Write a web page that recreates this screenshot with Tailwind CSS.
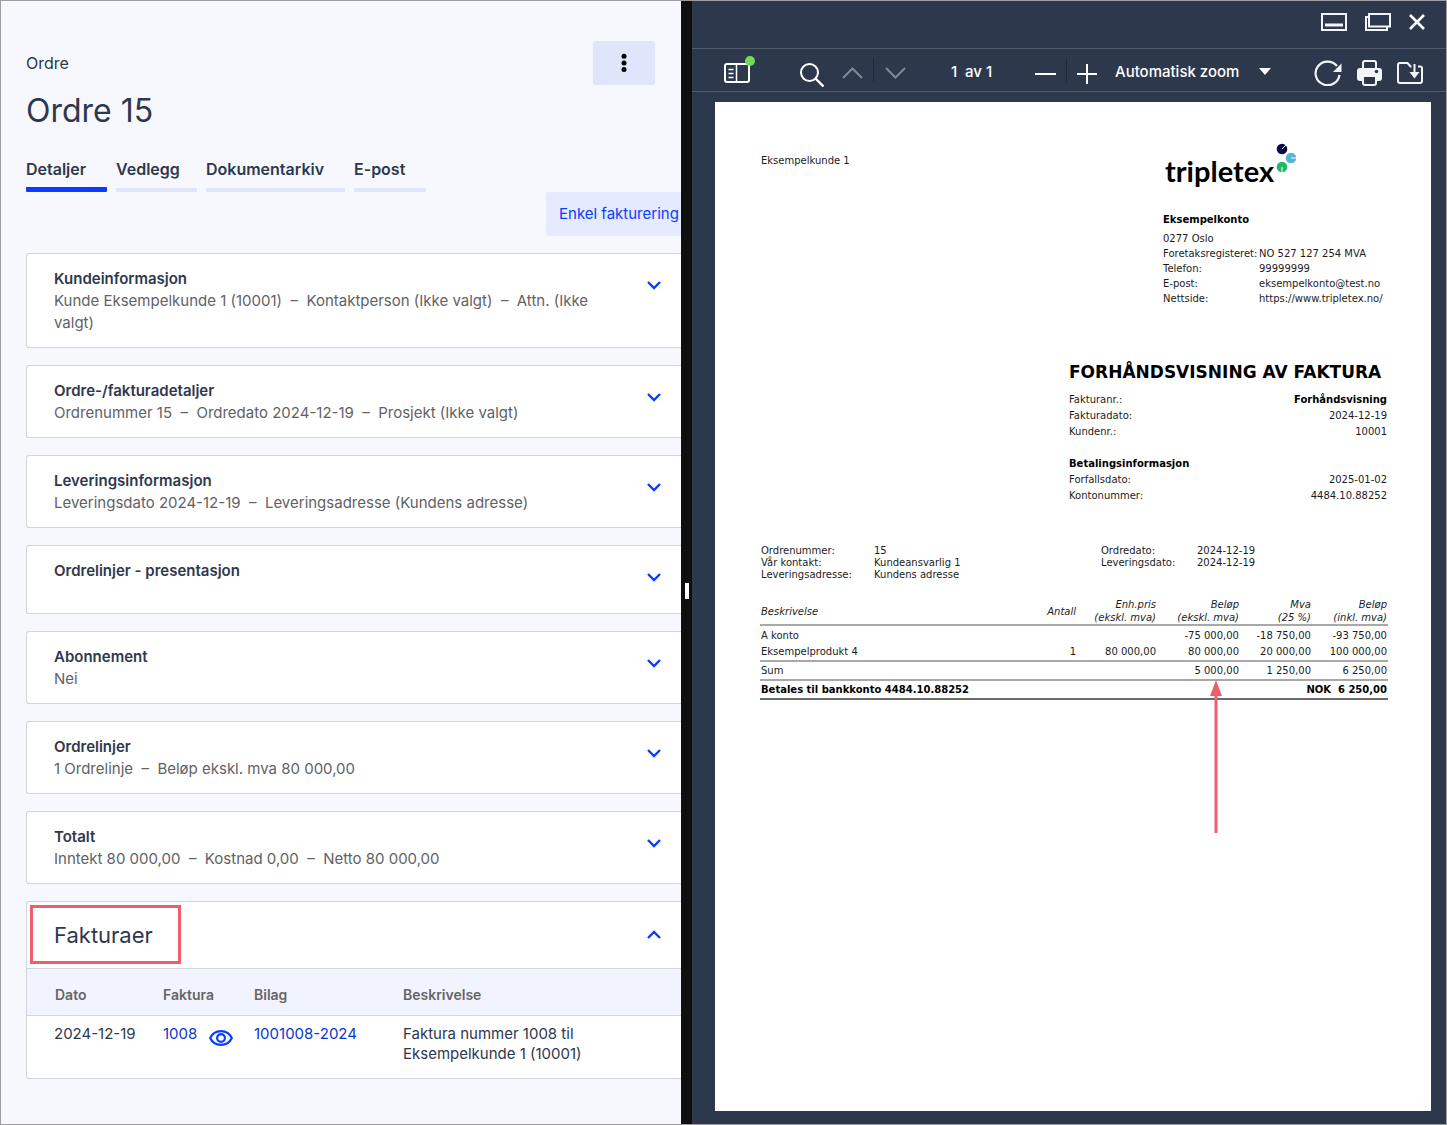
<!DOCTYPE html>
<html lang="no">
<head>
  <meta charset="UTF-8">
  <meta name="viewport" content="width=device-width, initial-scale=1.0">
  <title>Ordre 15</title>
  <script src="https://cdn.jsdelivr.net/npm/@tailwindcss/browser@4"></script>
</head>
<body class="min-h-screen flex border border-[#9c9ca1] bg-[#f7f8fd] font-[Inter,Roboto,sans-serif] text-[#2e384d]">

  <!-- Order -->
  <main class="w-8/17 shrink-0 pl-[25px] overflow-hidden">
    <header class="flex justify-between pt-10 pr-[26px]">
      <div>
        <p class="mt-2.5 text-base leading-6">Ordre</p>
        <h1 class="mt-4 text-[32px] leading-10">Ordre 15</h1>
      </div>
      <button type="button" aria-label="Flere valg" class="w-[62px] h-11 rounded-[3px] bg-[#dfe5fb] flex items-center justify-center">
        <svg class="w-1.5 h-5" viewBox="0 0 6 20" fill="#000"><circle cx="3" cy="3.3" r="2.5"/><circle cx="3" cy="10" r="2.5"/><circle cx="3" cy="16.6" r="2.5"/></svg>
      </button>
    </header>

    <nav class="mt-[25px] flex gap-[9px] text-base leading-6 font-semibold">
      <a href="#" class="w-[81px] h-9 pt-px border-b-5 border-[#0a3cff] rounded-[1px]">Detaljer</a>
      <a href="#" class="w-[81px] h-9 pt-px border-b-4 border-[#dfe5fb] rounded-[1px]">Vedlegg</a>
      <a href="#" class="w-[139px] h-9 pt-px border-b-4 border-[#dfe5fb] rounded-[1px]">Dokumentarkiv</a>
      <a href="#" class="w-[72px] h-9 pt-px border-b-4 border-[#dfe5fb] rounded-[1px]">E-post</a>
    </nav>

    <div class="flex justify-end">
      <button type="button" class="w-[135px] h-11 pl-[13px] rounded-l-[3px] bg-[#e5eafe] text-left text-[15px] text-[#0a3cff] whitespace-nowrap">Enkel fakturering</button>
    </div>

    <div class="mt-[17px] flex flex-col gap-[17px] text-[15px] leading-[22px]">
      <button type="button" class="flex items-start justify-between pt-3.5 pb-[13px] pl-[27px] pr-5 border border-r-0 border-[#d3d5da] rounded-l-[3px] bg-white text-left">
        <span class="w-[576px]">
          <span class="block font-semibold">Kundeinformasjon</span>
          <span class="block text-[#5f6266]">Kunde Eksempelkunde 1 (10001) &nbsp;–&nbsp; Kontaktperson (Ikke valgt) &nbsp;–&nbsp; Attn. (Ikke valgt)</span>
        </span>
        <svg class="mt-2.5 w-3.5 h-3.5" viewBox="0 0 14 14" fill="none" stroke="#0a3cff" stroke-width="2.4"><path d="M1 4l6 6 6-6"/></svg>
      </button>
      <button type="button" class="flex items-start justify-between pt-3.5 pb-[13px] pl-[27px] pr-5 border border-r-0 border-[#d3d5da] rounded-l-[3px] bg-white text-left">
        <span>
          <span class="block font-semibold">Ordre-/fakturadetaljer</span>
          <span class="block text-[#5f6266]">Ordrenummer 15 &nbsp;–&nbsp; Ordredato 2024-12-19 &nbsp;–&nbsp; Prosjekt (Ikke valgt)</span>
        </span>
        <svg class="mt-2.5 w-3.5 h-3.5" viewBox="0 0 14 14" fill="none" stroke="#0a3cff" stroke-width="2.4"><path d="M1 4l6 6 6-6"/></svg>
      </button>
      <button type="button" class="flex items-start justify-between pt-3.5 pb-[13px] pl-[27px] pr-5 border border-r-0 border-[#d3d5da] rounded-l-[3px] bg-white text-left">
        <span>
          <span class="block font-semibold">Leveringsinformasjon</span>
          <span class="block text-[#5f6266]">Leveringsdato 2024-12-19 &nbsp;–&nbsp; Leveringsadresse (Kundens adresse)</span>
        </span>
        <svg class="mt-2.5 w-3.5 h-3.5" viewBox="0 0 14 14" fill="none" stroke="#0a3cff" stroke-width="2.4"><path d="M1 4l6 6 6-6"/></svg>
      </button>
      <button type="button" class="flex items-start justify-between pt-3.5 pb-[31px] pl-[27px] pr-5 border border-r-0 border-[#d3d5da] rounded-l-[3px] bg-white text-left">
        <span class="font-semibold">Ordrelinjer - presentasjon</span>
        <svg class="mt-2.5 -mb-3 w-3.5 h-3.5" viewBox="0 0 14 14" fill="none" stroke="#0a3cff" stroke-width="2.4"><path d="M1 4l6 6 6-6"/></svg>
      </button>
      <button type="button" class="flex items-start justify-between pt-3.5 pb-[13px] pl-[27px] pr-5 border border-r-0 border-[#d3d5da] rounded-l-[3px] bg-white text-left">
        <span>
          <span class="block font-semibold">Abonnement</span>
          <span class="block text-[#5f6266]">Nei</span>
        </span>
        <svg class="mt-2.5 w-3.5 h-3.5" viewBox="0 0 14 14" fill="none" stroke="#0a3cff" stroke-width="2.4"><path d="M1 4l6 6 6-6"/></svg>
      </button>
      <button type="button" class="flex items-start justify-between pt-3.5 pb-[13px] pl-[27px] pr-5 border border-r-0 border-[#d3d5da] rounded-l-[3px] bg-white text-left">
        <span>
          <span class="block font-semibold">Ordrelinjer</span>
          <span class="block text-[#5f6266]">1 Ordrelinje &nbsp;–&nbsp; Beløp ekskl. mva 80 000,00</span>
        </span>
        <svg class="mt-2.5 w-3.5 h-3.5" viewBox="0 0 14 14" fill="none" stroke="#0a3cff" stroke-width="2.4"><path d="M1 4l6 6 6-6"/></svg>
      </button>
      <button type="button" class="flex items-start justify-between pt-3.5 pb-[13px] pl-[27px] pr-5 border border-r-0 border-[#d3d5da] rounded-l-[3px] bg-white text-left">
        <span>
          <span class="block font-semibold">Totalt</span>
          <span class="block text-[#5f6266]">Inntekt 80 000,00 &nbsp;–&nbsp; Kostnad 0,00 &nbsp;–&nbsp; Netto 80 000,00</span>
        </span>
        <svg class="mt-2.5 w-3.5 h-3.5" viewBox="0 0 14 14" fill="none" stroke="#0a3cff" stroke-width="2.4"><path d="M1 4l6 6 6-6"/></svg>
      </button>

      <section class="relative border border-r-0 border-[#d3d5da] rounded-l-[3px] bg-white">
        <button type="button" class="w-full h-[66px] flex items-center justify-between pl-[27px] pr-5">
          <span class="text-[22px]">Fakturaer</span>
          <svg class="w-3.5 h-3.5" viewBox="0 0 14 14" fill="none" stroke="#0a3cff" stroke-width="2.4"><path d="M1 10l6-6 6 6"/></svg>
        </button>
        <div class="absolute left-[3px] top-[3px] w-[151px] h-[59px] border-3 border-[#ee5f6d]"></div>
        <table class="w-full table-fixed text-left align-top">
          <thead class="bg-[#f1f3fe] text-sm text-[#666]">
            <tr class="h-[47px] border-y border-[#d3d5da]">
              <th class="w-[136px] pl-7 pt-1.5 font-semibold">Dato</th>
              <th class="w-[91px] pt-1.5 font-semibold">Faktura</th>
              <th class="w-[149px] pt-1.5 font-semibold">Bilag</th>
              <th class="pt-1.5 font-semibold">Beskrivelse</th>
            </tr>
          </thead>
          <tbody class="leading-5">
            <tr class="align-top">
              <td class="pl-[27px] pt-2">2024-12-19</td>
              <td class="pt-2 text-[#0c35d0]">
                <div class="flex gap-3">
                  <a href="#">1008</a>
                  <a href="#" aria-label="Vis faktura" class="pt-1.5"><svg class="w-6 h-4" viewBox="0 0 24 16" fill="none" stroke="#0a3cff" stroke-width="2.2"><path d="M1.2 8C3.200 3.600 7.200 1.100 12 1.100S20.800 3.600 22.800 8C20.800 12.400 16.800 14.900 12 14.900S3.200 12.400 1.200 8z"/><circle cx="12" cy="8" r="3.900"/></svg></a>
                </div>
              </td>
              <td class="pt-2 text-[#0c35d0]"><a href="#">1001008-2024</a></td>
              <td class="pt-2 pb-[14px] pr-12">Faktura nummer 1008 til Eksempelkunde 1 (10001)</td>
            </tr>
          </tbody>
        </table>
      </section>
    </div>
  </main>

  <div class="w-[11px] shrink-0 bg-[#0f0f0f] flex items-center justify-center pt-14">
    <span class="w-1 h-4 bg-white"></span>
  </div>

  <!-- PDF preview -->
  <aside class="flex-1 min-w-0 flex flex-col bg-[#2e384c] text-white">
    <div class="h-12 pr-[21px] pb-1.5 flex items-center justify-end gap-[18px] border-b border-[#525a6b]">
      <button type="button" aria-label="Minimer"><svg class="block w-[26px] h-[18px]" viewBox="0 0 26 18" fill="none" stroke="#f4f5f8" stroke-width="2"><path d="M1 1h24v16H1z"/><path d="M4 12h18" stroke-width="3"/></svg></button>
      <button type="button" aria-label="Gjenopprett"><svg class="block w-[26px] h-[18px]" viewBox="0 0 26 18" fill="none" stroke="#f4f5f8" stroke-width="2"><path d="M4 1h21v12.500H4z"/><path d="M4 4H1v13h21v-3.500"/></svg></button>
      <button type="button" aria-label="Lukk"><svg class="block w-4 h-4" viewBox="0 0 16 16" fill="none" stroke="#fff" stroke-width="2.600"><path d="M1 1l14 14M15 1L1 15"/></svg></button>
    </div>

    <div class="h-[43px] pt-1 pl-8 pr-[23px] flex items-center border-b border-[#525a6b] text-[15px] font-medium">
      <button type="button" aria-label="Sidepanel" class="relative mt-0.5">
        <svg class="block w-[26px] h-5" viewBox="0 0 26 20" fill="none" stroke="#fff" stroke-width="2"><rect x="1" y="1" width="24" height="18" rx="2"/><path d="M12.500 1v18M4.500 6.500h5M4.500 10.500h5M4.500 14.500h5" stroke-width="1.500"/></svg>
        <span class="absolute -top-[7px] -right-[5px] size-2.5 rounded-full bg-[#6fdc54]"></span>
      </button>
      <button type="button" aria-label="Søk" class="ml-[50px] mt-1.5"><svg class="block size-6" viewBox="0 0 24 24" fill="none" stroke="#fff" stroke-width="2"><circle cx="9.500" cy="9.500" r="8.500"/><path d="M15.500 15.500l8 8" stroke-width="2.400"/></svg></button>
      <button type="button" aria-label="Forrige" class="ml-[18px] mt-0.5"><svg class="block w-[21px] h-3" viewBox="0 0 21 12" fill="none" stroke="#818896" stroke-width="2"><path d="M1 11l9.500-9.500L20 11"/></svg></button>
      <span class="ml-2.5 mb-1 w-px h-6 bg-[#1f2839]"></span>
      <button type="button" aria-label="Neste" class="ml-[11px] mt-0.5"><svg class="block w-[21px] h-3" viewBox="0 0 21 12" fill="none" stroke="#818896" stroke-width="2"><path d="M1 1l9.500 9.500L20 1"/></svg></button>
      <label class="ml-[45px] w-[84px] flex gap-1 whitespace-nowrap"><input type="text" value="1" aria-label="Side" class="w-2.5 bg-transparent outline-none">av 1</label>
      <button type="button" aria-label="Zoom ut" class="mt-0.5"><svg class="block w-[21px] h-5" viewBox="0 0 21 20" stroke="#fff" stroke-width="2"><path d="M0 11h21"/></svg></button>
      <span class="ml-2.5 mb-1 w-px h-6 bg-[#1f2839]"></span>
      <button type="button" aria-label="Zoom inn" class="ml-2.5 mt-1"><svg class="block w-5 h-5" viewBox="0 0 20 20" stroke="#fff" stroke-width="2"><path d="M0 10h20M10 0v20"/></svg></button>
      <div class="relative ml-[18px] w-[156px]">
        <select aria-label="Zoom" class="w-full appearance-none bg-transparent outline-none"><option>Automatisk zoom</option></select>
        <svg class="absolute right-0 top-[7px] w-3 h-[7px] pointer-events-none" viewBox="0 0 12 7" fill="#fff"><path d="M0 0h12L6 7z"/></svg>
      </div>
      <div class="ml-auto flex items-center gap-[15px] pt-0.5">
        <button type="button" aria-label="Roter"><svg class="block w-7 h-[26px]" viewBox="0 0 28 26" fill="none" stroke="#f4f5f8" stroke-width="2.200"><path d="M25.500 14.800A12 11.800 0 1 1 23 6"/><path d="M27.500 3.500v8.500h-8.500z" fill="#f4f5f8" stroke="none"/></svg></button>
        <button type="button" aria-label="Skriv ut"><svg class="block w-[25px] h-[26px]" viewBox="0 0 25 26"><path d="M6 8V3a2 2 0 0 1 2-2h9a2 2 0 0 1 2 2v5" fill="none" stroke="#f4f5f8" stroke-width="2"/><path d="M3 8h19a3 3 0 0 1 3 3v7a3 3 0 0 1-3 3H3a3 3 0 0 1-3-3v-7a3 3 0 0 1 3-3z" fill="#f4f5f8"/><circle cx="19.500" cy="11.500" r="1.800" fill="#2e384c"/><path d="M6 16h13v7a2 2 0 0 1-2 2H8a2 2 0 0 1-2-2z" fill="#2e384c" stroke="#f4f5f8" stroke-width="2"/></svg></button>
        <button type="button" aria-label="Last ned"><svg class="block w-[26px] h-[22px]" viewBox="0 0 26 22" fill="none" stroke="#f4f5f8" stroke-width="2"><path d="M14.500 4.500h-1L10.500 1H3a2 2 0 0 0-2 2v16a2 2 0 0 0 2 2h20a2 2 0 0 0 2-2V6.500a2 2 0 0 0-2-2h-2"/><path d="M17.500 2v11"/><path d="M12.500 10h10l-5 6.500z" fill="#f4f5f8" stroke="none"/></svg></button>
      </div>
    </div>

    <div class="flex-1 flex pt-2.5 pb-[13px] pl-[23px] pr-[15px]">
      <article class="flex-1 bg-white pt-10 px-[43px] font-['DejaVu_Sans',sans-serif] text-[10px] leading-4 text-[#1c1c1c]">
        <div class="flex justify-between px-[3px]">
          <p class="pt-[11px]">Eksempelkunde 1</p>
          <div class="w-[222px]">
            <div class="flex h-[46px] text-black">
              <span class="pt-[11px] pl-0.5 font-[Lato,sans-serif] font-bold text-[29px] leading-9">tripletex</span>
              <svg class="w-[22px] h-[30px]" viewBox="0 0 22 30"><circle cx="8" cy="7" r="5.300" fill="#04094f"/><path d="M8 7l4-4" stroke="#fff" stroke-width="1"/><circle cx="17" cy="16" r="5.300" fill="#5ab4d6"/><path d="M17 16h5" stroke="#fff" stroke-width="1"/><circle cx="8" cy="25" r="5.300" fill="#22b866"/><path d="M8 25v5" stroke="#fff" stroke-width="1"/></svg>
            </div>
            <p class="mt-6 font-bold text-black">Eksempelkonto</p>
            <dl class="mt-[3px] grid grid-cols-[96px_1fr] leading-[15px] whitespace-nowrap">
              <dt class="col-span-2">0277 Oslo</dt>
              <dt>Foretaksregisteret:</dt><dd>NO 527 127 254 MVA</dd>
              <dt>Telefon:</dt><dd>99999999</dd>
              <dt>E-post:</dt><dd>eksempelkonto@test.no</dd>
              <dt>Nettside:</dt><dd>https://www.tripletex.no/</dd>
            </dl>
          </div>
        </div>

        <div class="ml-auto mt-[54px] w-[319px]">
          <h2 class="text-[17px] leading-6 font-bold text-black whitespace-nowrap">FORHÅNDSVISNING AV FAKTURA</h2>
          <dl class="mt-2 mr-px grid grid-cols-[1fr_auto]">
            <dt>Fakturanr.:</dt><dd class="text-right font-bold text-black">Forhåndsvisning</dd>
            <dt>Fakturadato:</dt><dd class="text-right">2024-12-19</dd>
            <dt>Kundenr.:</dt><dd class="text-right">10001</dd>
            <dt class="col-span-2 pt-4 font-bold text-black">Betalingsinformasjon</dt>
            <dt>Forfallsdato:</dt><dd class="text-right">2025-01-02</dd>
            <dt>Kontonummer:</dt><dd class="text-right">4484.10.88252</dd>
          </dl>
        </div>

        <dl class="mt-[41px] pl-[3px] grid grid-cols-[113px_227px_96px_1fr] leading-3">
          <dt>Ordrenummer:</dt><dd>15</dd>
          <dt>Ordredato:</dt><dd>2024-12-19</dd>
          <dt>Vår kontakt:</dt><dd>Kundeansvarlig 1</dd>
          <dt>Leveringsdato:</dt><dd>2024-12-19</dd>
          <dt>Leveringsadresse:</dt><dd>Kundens adresse</dd>
        </dl>

        <div class="relative mt-[17px] pl-0.5">
          <table class="w-full table-fixed text-right whitespace-nowrap">
            <thead class="leading-[13px] italic">
              <tr class="border-b-2 border-[#a9a9a9]">
                <th class="pl-px text-left font-normal">Beskrivelse</th>
                <th class="w-20 font-normal">Antall</th>
                <th class="w-20 font-normal">Enh.pris<br>(ekskl. mva)</th>
                <th class="w-[83px] font-normal">Beløp<br>(ekskl. mva)</th>
                <th class="w-[72px] font-normal">Mva<br>(25 %)</th>
                <th class="w-[77px] pr-px font-normal">Beløp<br>(inkl. mva)</th>
              </tr>
            </thead>
            <tbody>
              <tr>
                <td class="pl-px pt-0.5 text-left">A konto</td><td></td><td></td>
                <td class="pt-0.5">-75 000,00</td><td class="pt-0.5">-18 750,00</td><td class="pt-0.5 pr-px">-93 750,00</td>
              </tr>
              <tr class="border-b-2 border-[#a9a9a9]">
                <td class="pl-px text-left">Eksempelprodukt 4</td><td>1</td><td>80 000,00</td>
                <td>80 000,00</td><td>20 000,00</td><td class="pr-px">100 000,00</td>
              </tr>
              <tr class="border-b-2 border-[#a9a9a9]">
                <td class="pl-px pt-px text-left">Sum</td><td></td><td></td>
                <td class="pt-px">5 000,00</td><td class="pt-px">1 250,00</td><td class="pt-px pr-px">6 250,00</td>
              </tr>
              <tr class="border-b-2 border-[#6b6b6b] font-bold text-black">
                <td colspan="3" class="pl-px pt-px text-left">Betales til bankkonto 4484.10.88252</td>
                <td colspan="3" class="pt-px pr-px">NOK &nbsp;6 250,00</td>
              </tr>
            </tbody>
          </table>
          <svg class="absolute right-[166px] top-[82px] w-3 h-[153px]" viewBox="0 0 12 153" fill="#ee5f6d"><path d="M6 0l6 16H7.500v137h-3V16H0z"/></svg>
        </div>
      </article>
    </div>
  </aside>
</body>
</html>
